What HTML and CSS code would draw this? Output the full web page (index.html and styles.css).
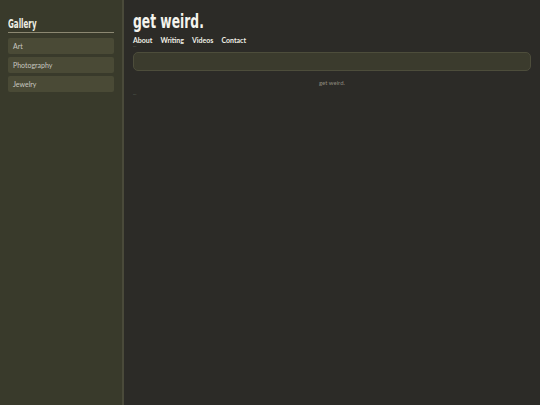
FILE: index.html
```html
<!DOCTYPE html>
<html>
<head>
<meta charset="utf-8">
<link rel="stylesheet" href="styles.css">
</head>
<body>
<div class="layout">
  <aside class="sidebar">
    <h2 class="side-title"><span class="squeeze-sm">Gallery</span></h2>
    <ul class="side-list">
      <li class="side-item">Art</li>
      <li class="side-item">Photography</li>
      <li class="side-item">Jewelry</li>
    </ul>
  </aside>
  <main class="main">
    <h1 class="title"><span class="squeeze">get weird.</span></h1>
    <nav class="nav">
      <span>About</span><span>Writing</span><span>Videos</span><span>Contact</span>
    </nav>
    <div class="tiny">---</div>
    <div class="search"></div>
    <p class="caption">get weird.</p>
    <div class="tiny">---</div>
  </main>
</div>
</body>
</html>
```
FILE: styles.css
```css
html, body { margin: 0; padding: 0; }
body {
  background: #2c2b27;
  font-family: "Lato", "Open Sans", sans-serif;
  color: #e8e8dc;
}
.layout { display: flex; min-height: 405px; }
.sidebar {
  background: #393a2b;
  border-right: 2px solid #4a4a3a;
  padding: 18px 8px 0 8px;
  box-sizing: border-box;
  flex: none;
  width: 124px;
}
.side-title {
  margin: 0;
  font-family: "DejaVu Sans Condensed", "DejaVu Sans", sans-serif;
  font-weight: bold;
  font-size: 12px;
  line-height: 12px;
  color: #f0f0e6;
  padding-bottom: 2px;
  border-bottom: 1px solid #8c8872;
  width: 106px;
}
.squeeze-sm { display: inline-block; transform: scaleX(0.66); transform-origin: left center; }
.side-list { list-style: none; margin: 5px 0 0 0; padding: 0; width: 106px; }
.side-item {
  background: #4a4a36;
  border-radius: 2px;
  height: 16px;
  line-height: 16px;
  padding-left: 5px;
  font-size: 7px;
  color: #c8c8c0;
  margin-bottom: 3px;
}
.main { flex: 1; padding: 10px 9px 0 9px; }
.title {
  margin: 0;
  font-family: "DejaVu Sans Condensed", "DejaVu Sans", sans-serif;
  font-weight: bold;
  font-size: 19px;
  color: #f4f4ee;
  line-height: 22px;
}
.squeeze { display: inline-block; transform: scaleX(0.72); transform-origin: left center; }
.nav { display: flex; gap: 8px; font-size: 7px; font-weight: bold; color: #f0f0e6; margin-top: 4px; line-height: 9px; }
.tiny { font-size: 3px; color: #9a9a8a; line-height: 4px; }
.search {
  margin-top: 3px;
  height: 17px;
  background: #3b3b2d;
  border: 1px solid #4d4d3b;
  border-radius: 5px;
}
.caption { text-align: center; font-size: 6px; color: #8c8a7c; margin: 8px 0 6px 0; line-height: 8px; }
```
